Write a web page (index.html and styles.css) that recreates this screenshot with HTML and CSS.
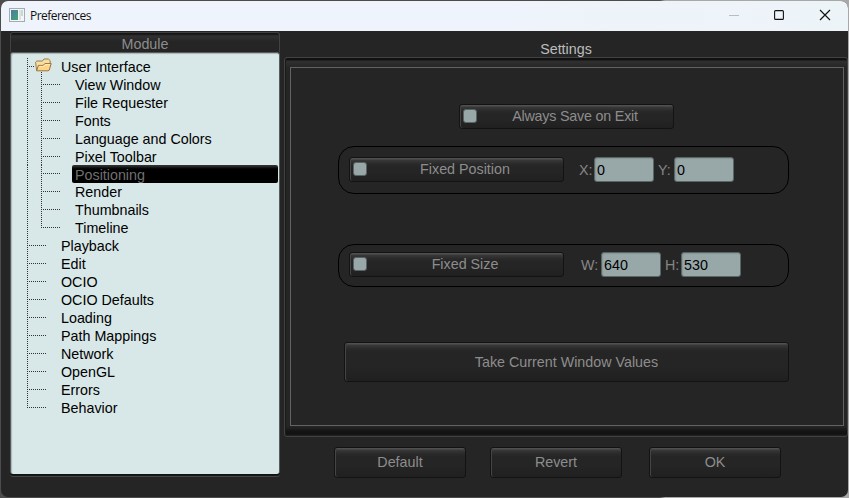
FILE: index.html
```html
<!DOCTYPE html>
<html lang="en">
<head>
<meta charset="utf-8">
<title>Preferences</title>
<link rel="stylesheet" href="styles.css">
</head>
<body>
<div class="window">
  <header class="titlebar">
    <svg class="app-icon" width="16" height="14" viewBox="0 0 16 14">
      <defs><linearGradient id="pane" x1="0" y1="0" x2="1" y2="1"><stop offset="0" stop-color="#4a7ba8"/><stop offset="1" stop-color="#43a66c"/></linearGradient></defs>
      <rect x=".5" y=".5" width="15" height="13" fill="#f4f5f5" stroke="#a5abae"/>
      <rect x="2" y="2" width="7" height="10" fill="url(#pane)"/>
      <rect x="10" y="2" width="2" height="10" fill="#dce2e5"/>
      <rect x="12" y="2" width="2" height="6" fill="#c4dccf"/>
    </svg>
    <h1 class="title">Preferences</h1>
    <div class="controls">
      <svg width="10" height="12" viewBox="0 0 10 12"><path d="M0 6.5H10" stroke="#b9bcc1"/></svg>
      <svg width="10" height="12" viewBox="0 0 10 12"><rect x=".6" y="1.6" width="8.8" height="8.8" rx="1" fill="none" stroke="#111" stroke-width="1.1"/></svg>
      <svg width="12" height="12" viewBox="0 0 12 12"><path d="M1 1L11 11M11 1L1 11" stroke="#111" stroke-width="1.15"/></svg>
    </div>
  </header>
  <div class="content">
    <aside class="sidebar">
      <div class="sidebar-head">Module</div>
      <ul class="tree">
        <li class="row parent"><svg class="folder" width="17" height="14" viewBox="0 0 17 14">
          <path d="M1.6 12.4L.6 4.2 1.8 3H5.8L7.2 3.2 9 1H13.4L15.2 2.6V6" fill="#f6dfa0" stroke="#9b7b48"/>
          <path d="M1.6 12.8L3.4 7.4H8.2L9.8 5.6H16.2L14.2 12.2 13 12.8Z" fill="#ffd485" stroke="#9b7040"/>
          <path d="M4.2 8.4H8.8L10.4 6.6H15" fill="none" stroke="#fff0bd"/>
        </svg>User Interface</li>
        <li class="row child">View Window</li>
        <li class="row child">File Requester</li>
        <li class="row child">Fonts</li>
        <li class="row child">Language and Colors</li>
        <li class="row child">Pixel Toolbar</li>
        <li class="row child selected"><span>Positioning</span></li>
        <li class="row child">Render</li>
        <li class="row child">Thumbnails</li>
        <li class="row child last">Timeline</li>
        <li class="row">Playback</li>
        <li class="row">Edit</li>
        <li class="row">OCIO</li>
        <li class="row">OCIO Defaults</li>
        <li class="row">Loading</li>
        <li class="row">Path Mappings</li>
        <li class="row">Network</li>
        <li class="row">OpenGL</li>
        <li class="row">Errors</li>
        <li class="row end">Behavior</li>
      </ul>
    </aside>
    <main class="main">
      <h2 class="heading">Settings</h2>
      <section class="panel">
        <div class="settings">
          <button class="btn toggle save"><i class="check"></i><span>Always Save on Exit</span></button>
          <div class="group position">
            <button class="btn toggle"><i class="check"></i><span>Fixed Position</span></button>
            <label for="x">X:</label><input id="x" value="0">
            <label for="y">Y:</label><input id="y" value="0">
          </div>
          <div class="group size">
            <button class="btn toggle"><i class="check"></i><span>Fixed Size</span></button>
            <label for="w">W:</label><input id="w" value="640">
            <label for="h">H:</label><input id="h" value="530">
          </div>
          <button class="btn take">Take Current Window Values</button>
        </div>
      </section>
      <footer class="actions">
        <button class="btn">Default</button>
        <button class="btn">Revert</button>
        <button class="btn">OK</button>
      </footer>
    </main>
  </div>
</div>
</body>
</html>
```
FILE: styles.css
```css
* { box-sizing: border-box; }
body {
  margin: 0;
  height: 498px;
  padding: 1px;
  overflow: hidden;
  background: linear-gradient(90deg, #4c4c4c 0 660px, #a8a8a8 665px);
  font: 14.3px/18px "Liberation Sans", Arial, sans-serif;
}
.window {
  width: 847px;
  height: 496px;
  overflow: hidden;
  border-radius: 7px;
  background: #252525;
}
.titlebar {
  display: flex;
  align-items: center;
  height: 30px;
  padding: 0 17px 0 8px;
  background: linear-gradient(90deg, #eff3fb 60%, #edf4f8);
}
.app-icon { margin-bottom: 2px; }
.title {
  margin: 0 0 0 5px;
  font: 12px/16px "Open Sans", "Noto Sans", sans-serif;
  letter-spacing: -.55px;
  color: #111;
}
.controls { display: flex; gap: 35px; margin-left: auto; margin-bottom: 2px; }
.controls svg { display: block; }
.content { display: flex; height: 466px; }
.sidebar { width: 270px; margin: 1px 4px 0 9px; }
.sidebar-head {
  height: 20px;
  padding-top: 2px;
  border: 1px solid #414141;
  border-bottom: 0;
  border-radius: 3px 3px 0 0;
  background: linear-gradient(#151515 0 1px, #303030 3px, #252525 9px);
  color: #8d8d8d;
  text-align: center;
}
.tree {
  height: 422px;
  margin: 0;
  padding: 5px 1px 0 16px;
  list-style: none;
  color: #000;
  background: #d8e8e8;
  border: 1px solid #555c5c;
  border-bottom: 0;
  border-radius: 3px;
  box-shadow: inset 1px 1px 1px #a9b5b5, 0 1px #111, 0 2px #181818, 0 3px #454545;
}
.row {
  height: 18px;
  padding-left: 34px;
  white-space: nowrap;
  --h: repeating-linear-gradient(90deg, #333 0 1px, transparent 1px 2px);
  --v: repeating-linear-gradient(#333 0 1px, transparent 1px 2px);
  background: var(--v) 0 0 / 1px 18px no-repeat, var(--h) 0 8px / 19px 1px no-repeat;
}
.parent {
  display: flex;
  padding-left: 9px;
  background: var(--v) 0 0 / 1px 18px no-repeat, var(--h) 0 8px / 8px 1px no-repeat, var(--v) 14px 14px / 1px 4px no-repeat;
}
.folder { flex: none; margin: 0 9px 0 -1px; }
.child {
  padding-left: 48px;
  background: var(--v) 0 0 / 1px 18px no-repeat, var(--v) 14px 0 / 1px 18px no-repeat, var(--h) 14px 8px / 19px 1px no-repeat;
}
.last { background-size: 1px 18px, 1px 9px, 19px 1px; }
.end { background-size: 1px 9px, 19px 1px; }
.selected { padding-left: 45px; }
.selected span {
  display: block;
  height: 18px;
  margin-top: -1px;
  padding-left: 3px;
  border-radius: 2px;
  background: linear-gradient(#303030 0 1px, #1c1c1c 2px, #000 4px);
  color: #707070;
  line-height: 20px;
}
.main { width: 564px; }
.heading {
  height: 26px;
  margin: 0;
  padding-top: 9px;
  font: inherit;
  color: #bdbdbd;
  text-align: center;
}
.panel {
  height: 380px;
  padding: 9px 3px 9px 5px;
  border: 1px solid #424242;
  border-radius: 3px;
  background: linear-gradient(#111 0 2px, #303030 3px, #252525 10px, #252525 367px, #242424 369px, #151515 373px, #111 376px, #252525 378px);
  box-shadow: inset 1px 0 #1a1a1a;
}
.settings {
  display: flex;
  flex-direction: column;
  height: 359px;
  padding: 36px 54px 0 47px;
  border: 1px solid #636363;
  background: #252525;
}
.btn {
  display: flex;
  align-items: center;
  justify-content: center;
  margin: 0;
  padding: 0 0 1px;
  border: 1px solid #131313;
  border-radius: 3px;
  background: linear-gradient(#505050 0 1px, #383838 2px, #292929 6px, #252525 9px, #252525 60%, #202020);
  box-shadow: inset 1px 0 #454545;
  color: #8d8d8d;
  font: inherit;
}
.toggle { width: 215px; height: 25px; padding-left: 3px; }
.toggle span { flex: 1; text-align: center; }
.check {
  width: 14px;
  height: 14px;
  border: 1px solid #596363;
  border-radius: 3px;
  background: #98a8a8;
}
.save { align-self: flex-start; margin-left: 121px; letter-spacing: -.2px; }
.group {
  display: flex;
  align-items: center;
  height: 48px;
  padding: 0 0 1px 10px;
  border: 1px solid #000;
  border-radius: 16px;
  color: #858585;
}
.position { margin-top: 17px; }
.size { height: 43px; margin-top: 50px; padding-bottom: 2px; }
.group .toggle { margin-right: 15px; }
.size .toggle { margin-right: 17px; }
.group label { width: 16px; }
.position .toggle + label { width: 15px; }
.size .toggle + label { width: 20px; }
.group input {
  width: 60px;
  height: 25px;
  margin: 0 4px 0 0;
  padding: 0 2px;
  border: 1px solid #586666;
  border-radius: 3px;
  background: #98a8a8;
  box-shadow: inset 1px 1px 1px #879696;
  color: #000;
  font: inherit;
}
.take { height: 40px; margin: 55px 0 0 6px; }
.actions { display: flex; gap: 24px; padding: 10px 0 0 50px; }
.actions .btn { width: 132px; height: 31px; }
.actions .btn:last-child { margin-left: 3px; }
```
